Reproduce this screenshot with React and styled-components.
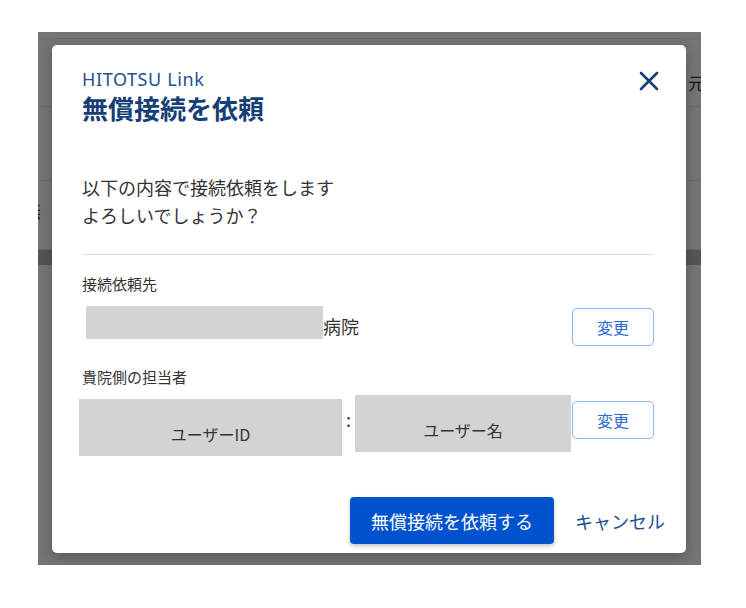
import React from 'react';
import styled, { createGlobalStyle } from 'styled-components';

const GlobalStyle = createGlobalStyle`
    body {
        margin: 0;
        background: #fff;
        font-family: 'Noto Sans', 'Noto Sans CJK JP', sans-serif;
    }
`;

const Stage = styled.div`
    position: relative;
    margin: 32px 0 0 38px;
    width: 663px;
    height: 533px;
    overflow: hidden;
    background: #fff;
`;

const BgPage = styled.div`
    display: flex;
    flex-direction: column;
    height: 100%;
    color: #333;
    font-family: 'Noto Sans CJK JP', sans-serif;
    font-size: 17px;
`;

const BgRow = styled.div`
    height: ${p => p.h}px;
    border-bottom: 1px solid #e6e6e6;
    display: flex;
    align-items: center;
    justify-content: space-between;
    box-sizing: border-box;
`;

const BgBand = styled.div`
    height: 15px;
    background: #b9b9b9;
    border-bottom: 3px solid #fff;
    box-sizing: content-box;
`;

const BgText = styled.span`
    margin: ${p => p.m};
    font-size: 17px;
`;

const Backdrop = styled.div`
    position: absolute;
    inset: 0;
    background: rgba(0, 0, 0, 0.54);
    padding: 13px 15px 12px 14px;
    box-sizing: border-box;
`;

const Modal = styled.div`
    background: #fff;
    border-radius: 5px;
    height: 100%;
    box-sizing: border-box;
    padding: 22px 32px 9px 30px;
    display: flex;
    flex-direction: column;
    box-shadow: 0 4px 14px rgba(0, 0, 0, 0.25);
    font-family: 'Noto Sans', 'Noto Sans CJK JP', sans-serif;
`;

const Header = styled.div`
    display: flex;
    justify-content: space-between;
    align-items: flex-start;
`;

const Brand = styled.div`
    color: #21508f;
    font-size: 18px;
    letter-spacing: 0.6px;
    line-height: 24px;
`;

const Title = styled.h1`
    margin: 0;
    color: #163f76;
    font-family: 'Noto Sans CJK JP', sans-serif;
    font-size: 26px;
    font-weight: 700;
    line-height: 34px;
`;

const CloseButton = styled.button`
    border: none;
    background: none;
    padding: 0;
    width: 24px;
    height: 24px;
    margin: 2px -7px 0 0;
    display: flex;
    align-items: center;
    justify-content: center;
    cursor: pointer;
`;

const Message = styled.p`
    margin: 48px 0 0;
    color: #333;
    font-family: 'Noto Sans CJK JP', sans-serif;
    font-size: 18px;
    line-height: 28px;
`;

const Divider = styled.hr`
    margin: 25px 0 0;
    border: none;
    border-top: 1px solid #dcdcdc;
`;

const Label = styled.div`
    margin-top: ${p => p.mt}px;
    color: #333;
    font-family: 'Noto Sans CJK JP', sans-serif;
    font-size: 15px;
    line-height: 22px;
`;

const FieldRow = styled.div`
    margin-top: ${p => p.mt}px;
    display: flex;
    align-items: flex-start;
    font-family: 'Noto Sans CJK JP', sans-serif;
    color: #333;
`;

const Redact = styled.div`
    background: #d3d3d3;
    width: ${p => p.w}px;
    height: ${p => p.h}px;
    margin: ${p => p.m || '0'};
    display: flex;
    align-items: flex-end;
    justify-content: center;
    box-sizing: border-box;
    padding-bottom: 10px;
    font-size: 16px;
    color: #333;
    flex-shrink: 0;
`;

const Value = styled.span`
    font-size: 18px;
    line-height: 28px;
    margin-top: ${p => p.mt || 0}px;
    margin-left: ${p => p.ml || 0}px;
`;

const Spacer = styled.div`
    flex: 1;
`;

const ChangeButton = styled.button`
    width: 82px;
    height: 38px;
    margin-top: ${p => p.mt || 0}px;
    border: 1px solid #8fb5ee;
    border-radius: 5px;
    background: #fff;
    color: #2a6bd0;
    font-family: 'Noto Sans CJK JP', sans-serif;
    font-size: 16px;
    flex-shrink: 0;
    cursor: pointer;
`;

const Footer = styled.div`
    margin: auto -21px 0 0;
    display: flex;
    justify-content: flex-end;
    align-items: center;
    gap: 11px;
`;

const PrimaryButton = styled.button`
    width: 204px;
    height: 47px;
    border: none;
    border-radius: 4px;
    background: #0053cc;
    color: #fff;
    font-family: 'Noto Sans CJK JP', sans-serif;
    font-size: 18px;
    box-shadow: 0 2px 4px rgba(0, 0, 0, 0.25);
    cursor: pointer;
`;

const TextButton = styled.button`
    border: none;
    background: none;
    padding: 0 10px;
    height: 47px;
    color: #21508f;
    font-family: 'Noto Sans CJK JP', sans-serif;
    font-size: 18px;
    cursor: pointer;
`;

const CloseIcon = () => (
    <svg width="20" height="20" viewBox="0 0 20 20">
        <path d="M2 2 L18 18 M18 2 L2 18" stroke="#163f76" strokeWidth="2.6" strokeLinecap="round" />
    </svg>
);

const App = () => (
    <>
        <GlobalStyle />
        <Stage>
            <BgPage>
                <BgRow h={7} />
                <BgRow h={68}>
                    <span />
                    <BgText m="20px -4px 0 0">元</BgText>
                </BgRow>
                <BgRow h={74} />
                <BgRow h={69}>
                    <BgText m="0 0 10px -14px">無</BgText>
                </BgRow>
                <BgBand />
            </BgPage>
            <Backdrop>
                <Modal>
                    <Header>
                        <div>
                            <Brand>HITOTSU Link</Brand>
                            <Title>無償接続を依頼</Title>
                        </div>
                        <CloseButton aria-label="close">
                            <CloseIcon />
                        </CloseButton>
                    </Header>

                    <Message>
                        以下の内容で接続依頼をします<br />
                        よろしいでしょうか？
                    </Message>
                    <Divider />

                    <Label mt={18}>接続依頼先</Label>
                    <FieldRow mt={11}>
                        <Redact w={237} h={33} m="0 0 0 4px" />
                        <Value mt={6}>病院</Value>
                        <Spacer />
                        <ChangeButton mt={2}>変更</ChangeButton>
                    </FieldRow>

                    <Label mt={20}>貴院側の担当者</Label>
                    <FieldRow mt={7}>
                        <Redact w={263} h={57} m="4px 0 0 -3px">ユーザーID</Redact>
                        <Value mt={10} ml={4}>:</Value>
                        <Redact w={216} h={57} m="0 0 0 4px">ユーザー名</Redact>
                        <Spacer />
                        <ChangeButton mt={6}>変更</ChangeButton>
                    </FieldRow>

                    <Footer>
                        <PrimaryButton>無償接続を依頼する</PrimaryButton>
                        <TextButton>キャンセル</TextButton>
                    </Footer>
                </Modal>
            </Backdrop>
        </Stage>
    </>
);

export default App;
